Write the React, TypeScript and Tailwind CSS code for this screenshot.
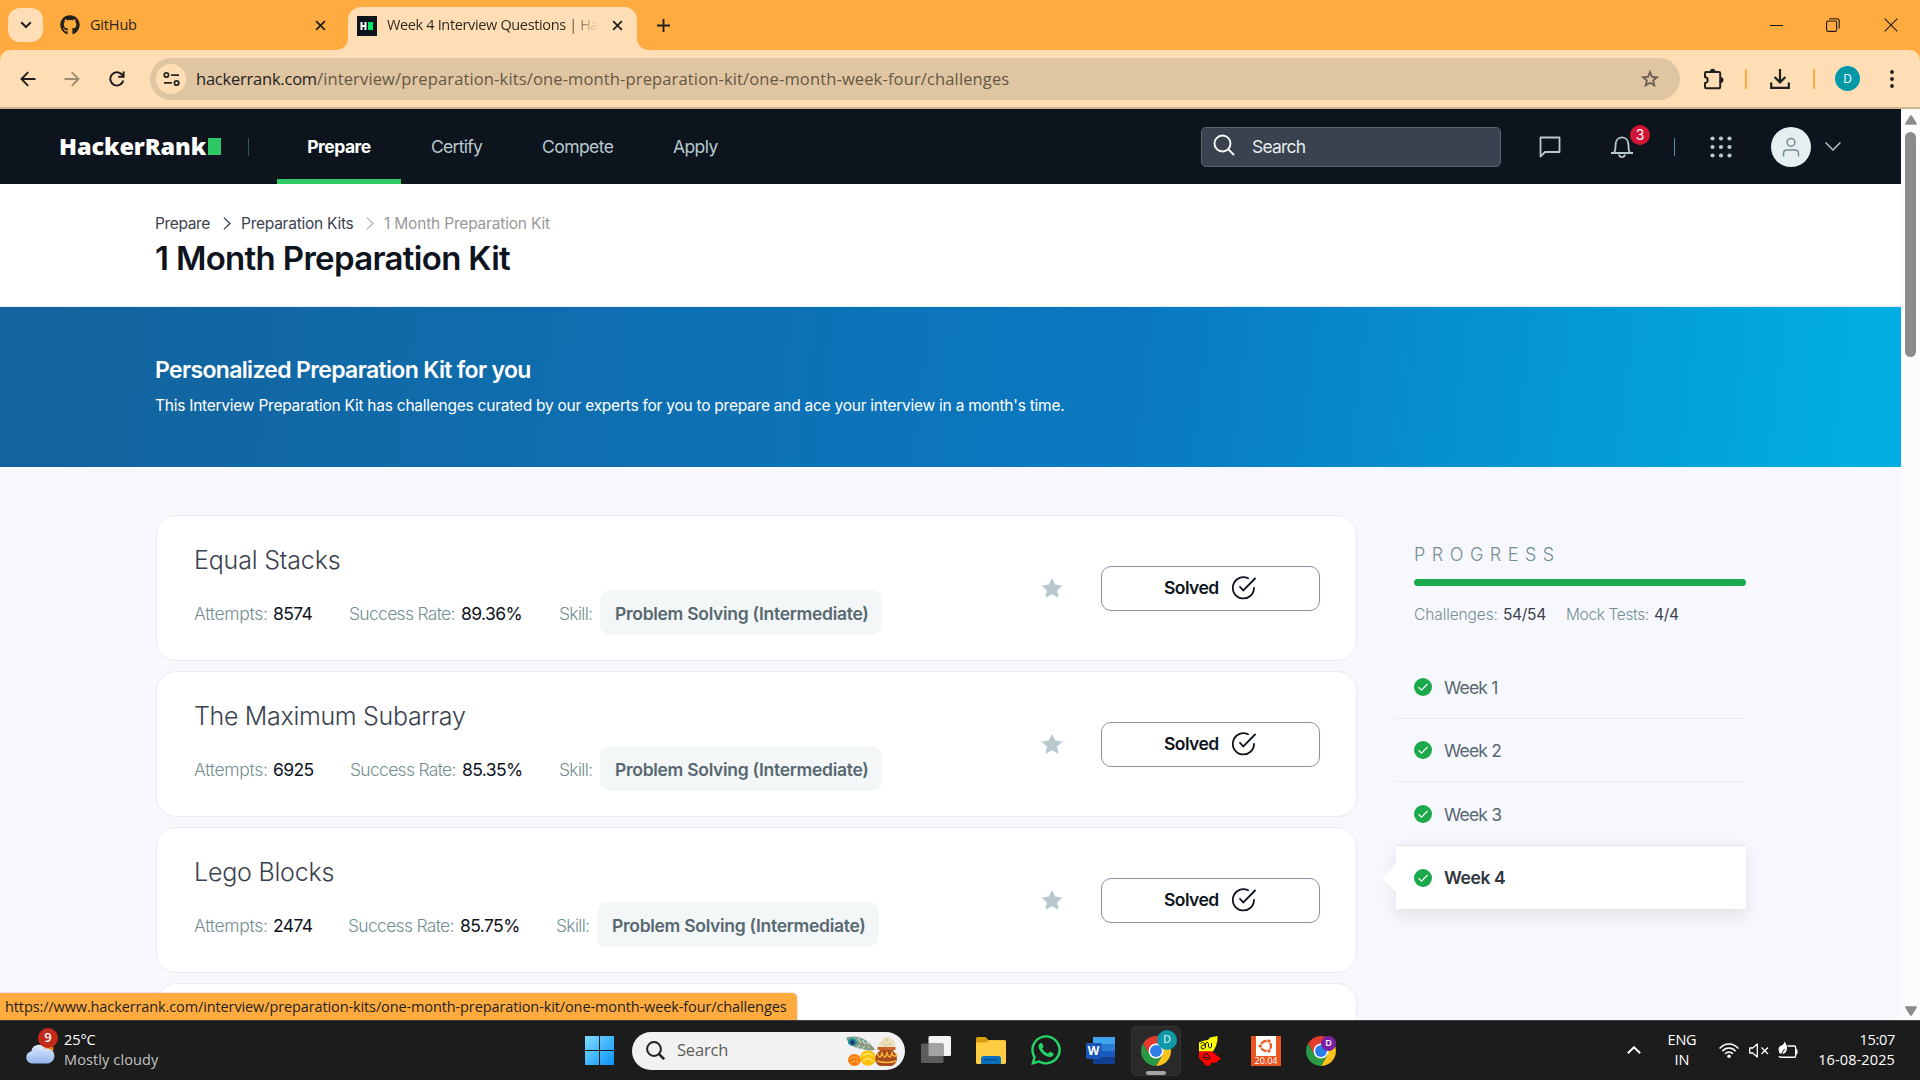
import type { ReactNode } from 'react';
import { FaGithub, FaWhatsapp } from 'react-icons/fa';

type IconProps = { className?: string };

function TabFlare({ className }: IconProps) {
  return (
    <svg viewBox="0 0 12 12" className={className} fill="#ffdeb5">
      <path d="M12 0V12H0C7 12 12 7 12 0Z" />
    </svg>
  );
}

function CloseX({ className }: IconProps) {
  return (
    <svg viewBox="0 0 12 12" className={className} stroke="#1f1f1f" strokeWidth="1.9" fill="none">
      <path d="M1.2 1.2l9.6 9.6M10.8 1.2l-9.6 9.6" />
    </svg>
  );
}

function TabStrip() {
  return (
    <div className="flex h-[50px] shrink-0 items-center bg-[#ffab40] font-['Open_Sans',sans-serif] text-[14.5px] text-[#2b2620]">
      <div className="ml-2 flex h-[34px] w-[35px] items-center justify-center rounded-[12px] bg-[#ffdeb5]">
        <svg viewBox="0 0 12 8" className="h-2 w-3" fill="none" stroke="#1f1f1f" strokeWidth="2">
          <path d="M1.2 1.2L6 6l4.800-4.800" />
        </svg>
      </div>
      <div className="ml-[17px] flex w-[266px] items-center">
        <FaGithub size={20} color="#24211d" />
        <span className="ml-[10px] tracking-[-0.17px]">GitHub</span>
        <CloseX className="ml-auto h-[11px] w-[11px]" />
      </div>
      <div className="relative ml-[22px] flex h-[43px] w-[289px] items-center self-end rounded-t-[13px] bg-[#ffdeb5] pb-[7px] pl-[9px]">
        <TabFlare className="absolute bottom-0 -left-3 h-3 w-3" />
        <TabFlare className="absolute -right-3 bottom-0 h-3 w-3 -scale-x-100" />
        <svg viewBox="0 0 20 20" className="mt-[1px] h-5 w-5">
          <path fill="#0e141e" d="M0 0h20v20H0z" />
          <path fill="#fff" d="M3.500 6h2v3h2V6h2v8h-2v-3h-2v3h-2z" />
          <path fill="#00ea64" d="M11 6h5v8h-5z" />
        </svg>
        <div className="ml-[10px] w-[211px] bg-linear-to-r from-[#2b2620] from-85% to-[#ffdeb5] bg-clip-text tracking-[-0.35px] whitespace-nowrap text-transparent">
          Week 4 Interview Questions | Ha
        </div>
        <CloseX className="ml-[14px] h-[11px] w-[11px]" />
      </div>
      <svg viewBox="0 0 14 14" className="ml-5 h-[13px] w-[13px]" stroke="#1f1f1f" strokeWidth="2">
        <path d="M7 0v14M0 7h14" />
      </svg>
      <div className="mr-[22px] ml-auto flex items-center text-[#1f1a10]">
        <span className="h-px w-[13px] bg-[#1f1a10]" />
        <svg viewBox="0 0 14 14" className="ml-[43px] h-[14px] w-[14px]" fill="none" stroke="currentColor" strokeWidth="1.1">
          <rect x=".6" y="3" width="10" height="10.400" rx="1.500" />
          <path d="M3.200 .8h7.600a2.400 2.400 0 0 1 2.400 2.400v7.400" />
        </svg>
        <svg viewBox="0 0 14 14" className="ml-[44px] h-[14px] w-[14px]" fill="none" stroke="currentColor" strokeWidth="1.1">
          <path d="M.7 .7l12.600 12.600M13.300 .7L.7 13.300" />
        </svg>
      </div>
    </div>
  );
}

function Toolbar() {
  return (
    <div className="h-[59px] shrink-0 bg-[#ffab40]">
      <div className="flex h-[59px] items-center rounded-t-[10px] border-b-2 border-[#cdb595] bg-[#ffdeb5] font-['Open_Sans',sans-serif] text-[#1f1f1f]">
        <svg viewBox="0 0 16 16" className="ml-5 h-4 w-4" fill="none" stroke="#1f1f1f" strokeWidth="1.900">
          <path d="M15.500 8H1.800M8.200 1.200L1.500 8l6.700 6.800" />
        </svg>
        <svg viewBox="0 0 16 16" className="ml-7 h-4 w-4" fill="none" stroke="#a08c73" strokeWidth="1.900">
          <path d="M.5 8h13.700M7.800 1.200L14.500 8l-6.700 6.800" />
        </svg>
        <svg viewBox="0 0 16 16" className="ml-[29px] h-4 w-4" fill="none" stroke="#1f1f1f" strokeWidth="2">
          <path d="M14.300 9.500A6.600 6.600 0 1 1 13 3.700L14.500 5.500M14.600 .4v5.400H9.200" />
        </svg>
        <div className="ml-[25px] flex h-[42px] w-[1530px] items-center rounded-full bg-[#e0c5a2] pr-[19px] pl-[6px]">
          <div className="flex h-[30px] w-[30px] items-center justify-center rounded-full bg-[#ffdeb5]">
            <svg viewBox="0 0 18 16" className="h-4 w-[17px]" fill="none" stroke="#2b2620" strokeWidth="1.900">
              <circle cx="3.600" cy="3.800" r="2.300" />
              <path d="M8.500 3.800H17M1 12.200h8.500" />
              <circle cx="14.400" cy="12.200" r="2.300" />
            </svg>
          </div>
          <div className="ml-[10px] pt-[2px] text-[16.5px] whitespace-nowrap">
            <span className="tracking-[-0.22px]">hackerrank.com</span>
            <span className="tracking-[0.14px] text-[#645845]">
              /interview/preparation-kits/one-month-preparation-kit/one-month-week-four/challenges
            </span>
          </div>
          <svg viewBox="0 0 24 24" className="ml-auto h-[22px] w-[22px]" fill="#6a5f52">
            <path d="M8.850 16.820L12 14.920l3.150 1.930-.83-3.600 2.780-2.400-3.650-.32L12 7.150l-1.450 3.350-3.650.32 2.780 2.430zM5.820 21l1.640-7.030L2 9.240l7.190-.61L12 2l2.810 6.630 7.190.61-5.450 4.730L18.180 21 12 17.270z" />
          </svg>
        </div>
        <svg viewBox="0 0 22 22" className="ml-[23px] h-[22px] w-[22px]">
          <path
            d="M2 5.200Q2 4 3.200 4H16q1.200 0 1.200 1.200V19q0 1.200-1.200 1.200H3.200Q2 20.200 2 19v-3.800c3.600-.6 3.600-5.600 0-6.200z"
            fill="none"
            stroke="#1f1f1f"
            strokeWidth="2"
          />
          <path d="M7 3.500a2.700 2.700 0 0 1 5.400 0zM17.600 9a2.900 2.900 0 0 1 0 5.800z" fill="#1f1f1f" />
        </svg>
        <span className="ml-[20px] h-5 w-[2px] bg-[#ffab40]" />
        <svg viewBox="0 0 20 20" className="ml-[23px] h-5 w-5" fill="none" stroke="#1f1f1f" strokeWidth="2.200">
          <path d="M10 0v13M4.600 8l5.400 5.400L15.400 8M1.200 13.500v5.300h17.600v-5.300" />
        </svg>
        <span className="ml-[23px] h-5 w-[2px] bg-[#ffab40]" />
        <span className="ml-5 flex h-[25px] w-[25px] items-center justify-center rounded-full bg-[#0097a7] text-[12px] text-white">
          D
        </span>
        <svg viewBox="0 0 4 18" className="ml-[30px] h-[18px] w-1" fill="#1f1f1f">
          <circle cx="2" cy="2" r="1.900" />
          <circle cx="2" cy="9" r="1.900" />
          <circle cx="2" cy="16" r="1.900" />
        </svg>
      </div>
    </div>
  );
}

function NavBar() {
  return (
    <header className="flex h-[75px] shrink-0 items-center bg-[#0e141e] text-[17.5px] text-[#b7c9cc]">
      <div className="ml-[59px] flex w-[162px] items-center">
        <span className="w-[149px] font-['Open_Sans',sans-serif] text-[23.5px] leading-none font-extrabold tracking-[-0.1px] text-white">
          HackerRank
        </span>
        <span className="h-[17px] w-[13px] shrink-0 bg-[#2ec866]" />
      </div>
      <span className="ml-[27px] h-[18px] w-px bg-[#39505f]" />
      <div className="ml-7 flex h-[75px] w-[124px] items-center justify-center border-b-[5px] border-[#2ec866] pt-[7px] font-bold tracking-[-0.49px] text-white">
        Prepare
      </div>
      <span className="ml-[30px] w-[111px] pt-[2px] tracking-[-0.7px]">Certify</span>
      <span className="w-[131px] pt-[2px] tracking-[-0.55px]">Compete</span>
      <span className="pt-[2px] tracking-[-0.6px]">Apply</span>
      <div className="ml-auto flex h-10 w-[300px] items-center rounded-[5px] border border-[#576871] bg-[#39424e] pl-[11px]">
        <svg viewBox="0 0 22 22" className="mb-[3px] h-[22px] w-[22px]" fill="none" stroke="#fff" strokeWidth="1.900">
          <circle cx="9.500" cy="9.500" r="8" />
          <path d="M15.200 15.200l5.800 5.800" />
        </svg>
        <span className="ml-[17px] pt-[2px] tracking-[-0.8px] text-[#e7eeef]">Search</span>
      </div>
      <svg viewBox="0 0 22 22" className="ml-[38px] h-[22px] w-[22px]" fill="none" stroke="#b7c9cc" strokeWidth="1.800">
        <path d="M1.500 20.500V1.500h19v14.500H6z" strokeLinejoin="round" />
      </svg>
      <div className="relative ml-[49px]">
        <svg viewBox="0 0 24 24" className="h-6 w-6" fill="none" stroke="#b7c9cc" strokeWidth="1.800">
          <path d="M1 18h22M4 18c1.200-1.800 1.500-3.500 1.500-7.500C5.500 5.500 8.200 2.400 12 2.400s6.500 3.100 6.500 8.100c0 4 .3 5.700 1.500 7.500M9 19.500c.4 1.600 1.400 2.600 3 2.600s2.600-1 3-2.600" />
        </svg>
        <span className="absolute -top-[10px] left-[20px] flex h-5 w-5 items-center justify-center rounded-full bg-[#d11534] text-[14px] text-white">
          3
        </span>
      </div>
      <span className="ml-[40px] h-[18px] w-px bg-[#5b8ea6]" />
      <svg viewBox="0 0 22 22" className="ml-[35px] h-[22px] w-[22px]" fill="#b7c9cc">
        {[2.5, 11, 19.5].map((y) =>
          [2.5, 11, 19.5].map((x) => <circle key={`${x}-${y}`} cx={x} cy={y} r="2.100" />),
        )}
      </svg>
      <span className="ml-[39px] flex h-10 w-10 items-center justify-center rounded-full bg-[#e7eeef]">
        <svg viewBox="0 0 18 20" className="h-5 w-[18px]" fill="none" stroke="#738f93" strokeWidth="1.500">
          <circle cx="9" cy="5.300" r="3.900" />
          <path d="M1.500 19.500v-2.800q0-3.700 3.700-3.700h7.600q3.700 0 3.700 3.700v2.800" />
        </svg>
      </span>
      <svg viewBox="0 0 16 9" className="mr-[60px] ml-[14px] h-[9px] w-4" fill="none" stroke="#b7c9cc" strokeWidth="1.400">
        <path d="M.6 .6L8 8l7.400-7.400" />
      </svg>
    </header>
  );
}

function Crumb({ color }: { color: string }) {
  return (
    <svg viewBox="0 0 8 13" className="mb-[2px] h-[13px] w-2" fill="none" stroke={color} strokeWidth="1.300">
      <path d="M.8 .6l6.200 5.900-6.200 5.900" />
    </svg>
  );
}

function PageHeader() {
  return (
    <div className="h-[123px] shrink-0 border-b border-[#eaebf3] bg-white pt-[30px] pl-[155px]">
      <div className="flex h-5 items-center text-[15.5px] whitespace-nowrap text-[#39424e]">
        <span className="w-[68px] tracking-[-0.36px]">Prepare</span>
        <Crumb color="#39424e" />
        <span className="ml-[10px] w-[125px] tracking-[-0.25px]">Preparation Kits</span>
        <Crumb color="#b5b5b5" />
        <span className="ml-[10px] tracking-[-0.19px] text-[#999]">1 Month Preparation Kit</span>
      </div>
      <h1 className="mt-[4px] text-[33px] leading-10 font-semibold tracking-[-0.68px] text-[#0e141e]">
        1 Month Preparation Kit
      </h1>
    </div>
  );
}

function Banner() {
  return (
    <div className="h-[160px] shrink-0 bg-[linear-gradient(97deg,#13639c_2%,#0a79c2_60%,#00aee3_98%)] pt-12 pl-[155px] text-white">
      <h2 className="text-[23px] leading-[30px] font-semibold tracking-[-0.66px]">Personalized Preparation Kit for you</h2>
      <p className="mt-[11px] text-[15.5px] leading-5 tracking-[-0.245px] whitespace-nowrap">
        This Interview Preparation Kit has challenges curated by our experts for you to prepare and ace your interview in a
        month's time.
      </p>
    </div>
  );
}

const challenges = [
  { title: 'Equal Stacks', attempts: '8574', rate: '89.36%', aw: 'w-[76px]', rw: 'w-[98px]', tr: 'tracking-[-0.17px]' },
  { title: 'The Maximum Subarray', attempts: '6925', rate: '85.35%', aw: 'w-[77px]', rw: 'w-[97px]', tr: 'tracking-[-0.32px]' },
  { title: 'Lego Blocks', attempts: '2474', rate: '85.75%', aw: 'w-[75px]', rw: 'w-[96px]', tr: 'tracking-[-0.22px]' },
];

function ChallengeCard({ c }: { c: (typeof challenges)[number] }) {
  return (
    <div className="flex h-[146px] shrink-0 items-center rounded-[20px] border border-[#eaebf3] bg-white pr-9 pl-[37px]">
      <div className="h-full pt-[29px]">
        <h3 className={`text-[25px] leading-[30px] font-light text-[#39424e] ${c.tr}`}>{c.title}</h3>
        <div className="mt-[15px] flex h-[45px] items-center text-[17.5px] leading-[26px] font-light whitespace-nowrap text-[#738f93]">
          <span className="w-[79px] pt-[3px] tracking-[-0.3px]">Attempts:</span>
          <span className={`pt-[3px] font-normal tracking-[-0.65px] text-[#0e141e] ${c.aw}`}>{c.attempts}</span>
          <span className="w-[112px] pt-[3px] tracking-[-0.7px]">Success Rate:</span>
          <span className={`pt-[3px] font-normal tracking-[-0.6px] text-[#0e141e] ${c.rw}`}>{c.rate}</span>
          <span className="w-[41px] pt-[3px] tracking-[-0.7px]">Skill:</span>
          <span className="flex h-[45px] w-[282px] items-center rounded-[10px] bg-[#f3f7f7] pt-[2px] pl-[15px] font-semibold tracking-[-0.29px] text-[#576871]">
            Problem Solving (Intermediate)
          </span>
        </div>
      </div>
      <svg viewBox="0 0 22 20" className="ml-auto h-5 w-[22px]" fill="#b7c9cc">
        <path d="M11 0l3.200 6.500 7.300.9-5.400 5 1.500 7.300L11 16.300l-6.600 3.400 1.500-7.300-5.400-5 7.300-.9z" />
      </svg>
      <div className="ml-[38px] flex h-[45px] w-[219px] items-center rounded-[10px] border border-[#918fa8] pl-[62px] text-[17.5px] font-semibold tracking-[-0.55px] text-[#0e141e]">
        Solved
        <svg viewBox="0 0 24 24" className="ml-[13px] h-6 w-6" fill="none" stroke="#0e141e" strokeWidth="1.800" strokeLinecap="round">
          <path d="M16 2.300A10.600 10.600 0 1 0 22 12M8 10.800l3.300 3.700L23 2.500" />
        </svg>
      </div>
    </div>
  );
}

function WeekCheck() {
  return (
    <svg viewBox="0 0 18 18" className="mt-[1px] h-[18px] w-[18px]">
      <circle cx="9" cy="9" r="9" fill="#1ba94c" />
      <path d="M4.500 9.300l3 2.800L13.500 6" fill="none" stroke="#fff" strokeWidth="1.200" />
    </svg>
  );
}

function Sidebar() {
  return (
    <aside className="ml-[39px] w-[350px] shrink-0 pt-[30px]">
      <div className="pl-[18px]">
        <div className="text-[18px] leading-5 font-light tracking-[6.5px] text-[#738f93]">PROGRESS</div>
        <div className="mt-[14px] h-[7px] rounded-full bg-[#1ba94c]" />
        <div className="mt-[19px] flex h-5 items-center text-[15.5px] font-light text-[#738f93]">
          <span className="w-[89px] tracking-[-0.1px]">Challenges:</span>
          <span className="w-[63px] font-normal tracking-[-0.3px] text-[#39424e]">54/54</span>
          <span className="w-[88px] tracking-[-0.36px]">Mock Tests:</span>
          <span className="font-normal tracking-[-0.3px] text-[#39424e]">4/4</span>
        </div>
      </div>
      <div className="mt-[30px] text-[17.5px] tracking-[-0.8px] text-[#576871]">
        {['Week 1', 'Week 2', 'Week 3'].map((w) => (
          <div key={w} className="flex h-[63.5px] items-center border-b border-[#e6e8ef] pl-[18px]">
            <WeekCheck />
            <span className="ml-[12px] pt-[3px]">{w}</span>
          </div>
        ))}
        <div className="relative flex h-[63.5px] items-center bg-white pl-[18px] font-semibold tracking-[-0.4px] text-[#39424e] shadow-[0_6px_16px_rgba(57,66,78,0.13)]">
          <svg viewBox="0 0 14 28" className="absolute top-[18px] -left-[14px] h-7 w-[14px]" fill="#fff">
            <path d="M14 0v28L0 14z" />
          </svg>
          <WeekCheck />
          <span className="ml-[12px] pt-[2px] text-[#30363f]">Week 4</span>
        </div>
      </div>
    </aside>
  );
}

function ScrollBar() {
  return (
    <div className="flex w-[19px] shrink-0 flex-col items-center bg-[#fcfcfc] pt-[6px] pb-[4px]">
      <svg viewBox="0 0 12 10" className="h-[10px] w-3" fill="#8b8b8b">
        <path d="M5 .8q1-1.200 2 0l4.700 7.500q.5 1.500-1 1.500H1.300q-1.500 0-1-1.500z" />
      </svg>
      <div className="mt-[7px] h-[225px] w-[11px] rounded-full bg-[#8b8b8b]" />
      <svg viewBox="0 0 12 10" className="mt-auto h-[10px] w-3" fill="#8b8b8b">
        <path d="M5 9.200q1 1.200 2 0l4.700-7.500q.5-1.500-1-1.500H1.300q-1.500 0-1 1.500z" />
      </svg>
    </div>
  );
}

function Chrome({ children }: { children?: ReactNode }) {
  return (
    <div className="relative h-[30px] w-[30px]">
      <svg viewBox="2 2 44 44" className="h-[30px] w-[30px]">
        <path fill="#e33b2e" d="M24 13H43.050A22 22 0 0 0 4.950 13L14.470 29.500L24 24z" />
        <path fill="#fcc31e" d="M43.050 13A22 22 0 0 1 24 46L33.530 29.500L24 24V13z" />
        <path fill="#2a9a47" d="M24 46A22 22 0 0 1 4.950 13L14.470 29.500L24 24L33.530 29.500z" />
        <circle cx="24" cy="24" r="11" fill="#fff" />
        <circle cx="24" cy="24" r="8.700" fill="#2b7de9" />
      </svg>
      {children}
    </div>
  );
}

function FestiveArt() {
  return (
    <svg viewBox="0 0 52 30" className="h-[30px] w-[52px]">
      <path d="M0 2C6-1 17 1 22 6c3 3 5 4 7 8-5 1-10 0-13-1C8 12 3 9 0 2z" fill="#7fa292" />
      <path d="M8 2l3 3M12 2l3 5M17 4l2 5M21 6l2 6M11 12l3-3M16 13l3-3" stroke="#e6e2cf" strokeWidth="1" />
      <path d="M7 7q12 0 21 6" stroke="#a9784a" strokeWidth=".9" fill="none" />
      <ellipse cx="6.500" cy="6" rx="4.500" ry="3.800" fill="#1c8f8b" />
      <circle cx="6.500" cy="6.500" r="2.200" fill="#1f2f86" />
      <ellipse cx="8.500" cy="24" rx="6.500" ry="6" fill="#f57c0a" />
      <path d="M4 23q4-4 9 0M5 27q4-4 8 0" stroke="#ffa33c" strokeWidth="1.500" fill="none" />
      <circle cx="22" cy="22" r="7.800" fill="#fbbf0c" />
      <path d="M17 20q5-5 10 0M17 25q5-5 10 0" stroke="#ffe052" strokeWidth="1.800" fill="none" />
      <path d="M33 11c-1-5 3-6 4-8 2-3 6-3 8 0 3 1 5 4 4 8z" fill="#ece0bd" />
      <path d="M36 7h2M40 4h2M43 8h2M39 9h2" stroke="#c9b586" />
      <path d="M32 11h17l-2 4c6 4 5 14-2 15H35c-7-1-8-11-1-15z" fill="#a9481c" />
      <path d="M31.500 11h18v3h-18z" fill="#c9652b" />
      <path d="M31 17q3 8 5 0 3 8 5 0 3 8 5 0 2 6 5 1M31 25q10 3 19 0" stroke="#f4b73c" strokeWidth="1.500" fill="none" />
    </svg>
  );
}

function Taskbar() {
  return (
    <footer className="flex h-[60px] shrink-0 items-center border-t border-[#3f4245] bg-[#1c1c1c] font-['Open_Sans',sans-serif] text-[14.5px] text-white">
      <div className="relative ml-[25px] h-[30px] w-[30px]">
        <svg viewBox="0 0 30 24" className="absolute top-[6px] left-0 h-6 w-[30px]">
          <defs>
            <linearGradient id="cloud" x1="0" y1="0" x2="0" y2="1">
              <stop offset="0" stopColor="#e2ecfb" />
              <stop offset="1" stopColor="#93b5ee" />
            </linearGradient>
          </defs>
          <circle cx="22" cy="7" r="6.500" fill="#f77c10" />
          <path d="M7 21.500a6.200 6.200 0 0 1-.6-12.300A7.300 7.300 0 0 1 20 6.600a7.500 7.500 0 0 1 3.500 14.900z" fill="url(#cloud)" />
        </svg>
        <span className="absolute -top-[8px] left-[13px] flex h-5 w-5 items-center justify-center rounded-full bg-[#c42b1c] text-[13px] font-semibold">
          9
        </span>
      </div>
      <div className="ml-[9px] w-[521px] pb-[2px] leading-5">
        <div className="tracking-[-0.1px]">25°C</div>
        <div className="tracking-[0.12px] text-[#c4c4c4]">Mostly cloudy</div>
      </div>
      <svg viewBox="0 0 29 29" className="h-[29px] w-[29px]">
        <defs>
          <linearGradient id="win" x1="0" y1="0" x2="1" y2="1">
            <stop offset="0" stopColor="#7fdcff" />
            <stop offset="1" stopColor="#0a93f5" />
          </linearGradient>
        </defs>
        <path d="M0 0h14v14H0zM15 0h14v14H15zM0 15h14v14H0zM15 15h14v14H15z" fill="url(#win)" />
      </svg>
      <div className="ml-[18px] flex h-[38px] w-[273px] items-center rounded-full bg-[#f2f2f2] pl-[14px]">
        <svg viewBox="0 0 19 19" className="h-[19px] w-[19px]" fill="none" stroke="#222" strokeWidth="2">
          <circle cx="8" cy="8" r="6.900" />
          <path d="M12.800 12.800l5.400 5.400" strokeWidth="2.600" />
        </svg>
        <span className="ml-3 w-[169px] text-[16.5px] tracking-[-0.2px] text-[#5c5c5c]">Search</span>
        <FestiveArt />
      </div>
      <svg viewBox="0 0 30 27" className="mb-[2px] ml-4 h-[27px] w-[30px]">
        <rect x="7.500" y="0" width="22.500" height="20" rx="1.500" fill="#f4f4f4" />
        <rect x="0" y="7.500" width="22.500" height="19.500" rx="1.500" fill="#5c5c5c" />
        <path d="M7.500 7.500h15V20h-15z" fill="#a3a3a3" />
      </svg>
      <svg viewBox="0 0 30 27" className="ml-[25px] h-[27px] w-[30px]">
        <path d="M0 1.500Q0 0 1.500 0h8l3 3H28q2 0 2 2v10H0z" fill="#d99a0b" />
        <path d="M0 5.500h10l3-2.200h15.500q1.500 0 1.500 1.500V25.500q0 1.500-1.500 1.500h-27Q0 27 0 25.500z" fill="#ffcd42" />
        <path d="M5 27v-5.500q0-2.500 2.500-2.500h15q2.500 0 2.500 2.500V27z" fill="#0a70c0" />
        <path d="M8.500 22.700h13" stroke="#054a85" strokeWidth="1.400" />
      </svg>
      <FaWhatsapp size={34} color="#25d366" className="mb-[1px] ml-[23px]" />
      <div className="relative mb-[1px] ml-[23px] h-[27px] w-[29px]">
        <svg viewBox="0 0 29 27" className="h-[27px] w-[29px]">
          <path fill="#41a5ee" d="M7 0h22v7H7z" />
          <path fill="#2b7cd3" d="M7 7h22v7H7z" />
          <path fill="#185abd" d="M7 14h22v6.500H7z" />
          <path fill="#103f91" d="M7 20.500h22V27H7z" />
          <rect y="6" width="15.500" height="16" rx="1" fill="#1a55b5" />
        </svg>
        <span className="absolute top-[6px] left-0 flex h-4 w-[15px] items-center justify-center text-[12px] leading-none font-bold">
          W
        </span>
      </div>
      <div className="relative ml-4 flex h-[50px] w-[50px] items-center justify-center rounded-[5px] border border-[#343434] bg-[#2a2a2a]">
        <Chrome>
          <span className="absolute -top-[6px] left-[16px] flex h-5 w-5 items-center justify-center rounded-full bg-[#0f98a6] text-[11px] font-semibold text-[#b9e6ea]">
            D
          </span>
        </Chrome>
        <span className="absolute bottom-0 left-[14px] h-1 w-5 rounded-full bg-[#a6a6a2]" />
      </div>
      <svg viewBox="0 0 22 30" className="ml-[18px] h-[30px] w-[22px]">
        <path d="M11 1.500L18.500 0v4l-1.500 6-3 5.500H0V6.500L4 4.800l5-.8z" fill="#ff0" />
        <path d="M0 15.500h13l3 2.500 6 4.500-5 4-5 .5-1 2.500H6L5 27 0 22z" fill="#f00" />
        <path
          d="M1.500 7.500q2-2.500 4 0t-2 1.500Q1 11 2.500 12.500t4-1V7.500q1.500-2.500 3 0v3.500q1 2 3 0V7M5 18.500q2-2 4 0t1.500 4-3 1-3-1.500 .5-3.500M5.500 21.500h4"
          fill="none"
          stroke="#111"
          strokeWidth="1"
        />
      </svg>
      <div className="ml-[30px] flex h-[30px] w-[30px] flex-col items-center bg-[#e95420]">
        <svg viewBox="0 0 20 20" className="h-5 w-5">
          <path fill="#fff" d="M0 0h20v20H0z" />
          <circle cx="10" cy="10" r="5" fill="none" stroke="#e95420" strokeWidth="2.300" />
          <g fill="#e95420" stroke="#fff" strokeWidth=".9">
            <circle cx="4.200" cy="10" r="2.100" />
            <circle cx="13" cy="5" r="2.100" />
            <circle cx="13" cy="15" r="2.100" />
          </g>
        </svg>
        <span className="text-[9px] leading-[10px]">20.04</span>
      </div>
      <div className="ml-[25px]">
        <Chrome>
          <span className="absolute top-0 left-[15px] flex h-[15px] w-[15px] items-center justify-center rounded-full bg-[#7b1fa2] text-[9px] font-semibold">
            D
          </span>
        </Chrome>
      </div>
      <svg viewBox="0 0 14 8" className="mb-[1px] ml-auto h-2 w-[14px]" fill="none" stroke="#fff" strokeWidth="1.900">
        <path d="M.8 7.200L7 1.200l6.200 6" />
      </svg>
      <div className="ml-[21px] w-[40px] pb-[1px] text-center leading-5">
        <div className="tracking-[-0.2px]">ENG</div>
        <div>IN</div>
      </div>
      <svg viewBox="0 0 20 15" className="ml-[17px] h-[15px] w-5" fill="none" stroke="#fff" strokeWidth="1.500">
        <path d="M.6 5.500Q4.500 1 10 1t9.400 4.500M3.400 8.200Q6 5 10 5t6.600 3.200M6 10.800Q7.800 9 10 9t4 1.800" />
        <circle cx="10" cy="13.200" r="1.700" fill="#fff" stroke="none" />
      </svg>
      <svg viewBox="0 0 20 15" className="ml-[10px] h-[15px] w-5" fill="none" stroke="#fff" strokeWidth="1.300">
        <path d="M.7 5h3L8.300 1v13L3.700 10h-3zM12.500 4.500l6.500 6.500M19 4.500L12.500 11" strokeLinejoin="round" />
      </svg>
      <svg viewBox="0 0 20 18" className="mb-[2px] ml-[9px] h-[18px] w-5" fill="none" stroke="#fff" strokeWidth="1.400">
        <path d="M9.500 5h6.500q1.700 0 1.700 1.700v8q0 1.600-1.700 1.600H3q-1.600 0-1.800-1.300M18.800 8.500v4.500" />
        <path d="M6.500.5c2.500 3 4 8 .5 11.500-2 1.300-4.500 1-5.500 0C-.5 8 1 5 3.500 4.500 5 4 6.200 2.500 6.500.5z" fill="#fff" stroke="none" />
        <path d="M3 14l3.500-6" stroke="#1c1c1c" strokeWidth="1" />
      </svg>
      <div className="mr-[25px] ml-[18px] w-[79px] pb-[2px] text-right leading-5">
        <div className="tracking-[-0.3px]">15:07</div>
        <div className="tracking-[0.12px] whitespace-nowrap">16-08-2025</div>
      </div>
    </footer>
  );
}

export default function App() {
  return (
    <div className="flex h-[1080px] w-[1920px] flex-col overflow-hidden font-['Inter',sans-serif]">
      <TabStrip />
      <Toolbar />
      <div className="relative flex h-[911px] shrink-0">
        <main className="flex w-[1901px] flex-col overflow-hidden bg-[#f7f8fd]">
          <NavBar />
          <PageHeader />
          <Banner />
          <div className="flex h-[553px] pt-12 pl-[156px]">
            <div className="flex w-[1201px] shrink-0 flex-col gap-[10px]">
              {challenges.map((c) => (
                <ChallengeCard key={c.title} c={c} />
              ))}
              <div className="h-[146px] shrink-0 rounded-[20px] border border-[#eaebf3] bg-white" />
            </div>
            <Sidebar />
          </div>
        </main>
        <ScrollBar />
        <div className="absolute bottom-0 left-0 flex h-[27px] w-[797px] items-center rounded-tr-[5px] bg-[#ffab40] pl-[5px] font-['Open_Sans',sans-serif] text-[14.5px] tracking-[-0.115px] whitespace-nowrap text-[#1f1f1f] shadow-[0_0_2px_rgba(0,0,0,0.3)]">
          https://www.hackerrank.com/interview/preparation-kits/one-month-preparation-kit/one-month-week-four/challenges
        </div>
      </div>
      <Taskbar />
    </div>
  );
}
